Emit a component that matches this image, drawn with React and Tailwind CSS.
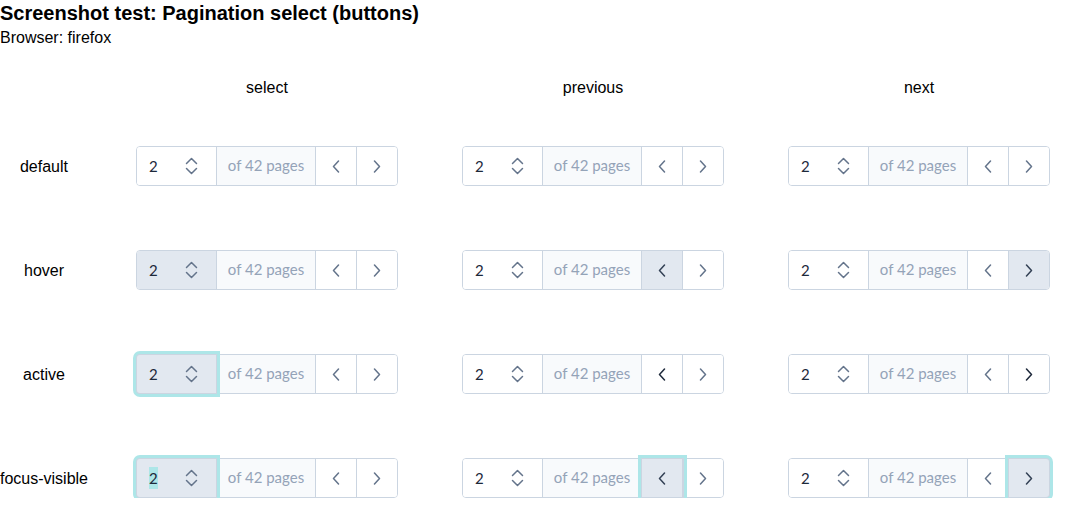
const ROWS = ["default", "hover", "active", "focus-visible"];
const COLS = ["select", "previous", "next"];

const RING = "relative z-10 shadow-[0_0_0_1px_#cbd5e1,0_0_0_4px_#ade6e8]";

function UpDown() {
  return (
    <svg width="13" height="18" viewBox="0 0 13 18" fill="none" stroke="currentColor" strokeWidth="1.5" strokeLinecap="round" strokeLinejoin="round">
      <path d="M1.5 6.5 L6.5 1.5 L11.5 6.5" />
      <path d="M1.5 11.5 L6.5 16.5 L11.5 11.5" />
    </svg>
  );
}

function Chevron({ dir }) {
  return (
    <svg width="8" height="13" viewBox="0 0 8 13" fill="none" stroke="currentColor" strokeWidth="1.5" strokeLinecap="round" strokeLinejoin="round">
      <path d={dir === "left" ? "M6.5 1 L1.5 6.5 L6.5 12" : "M1.5 1 L6.5 6.5 L1.5 12"} />
    </svg>
  );
}

function Pagination({ row, col }) {
  const on = (c) => col === c && row !== "default";
  const selBg = on("select") ? "bg-[#e2e8f0]" : "bg-white";
  const btn = (c) => {
    if (!on(c)) return "bg-white text-[#64748b]";
    if (row === "active") return "bg-white text-[#1e293b]";
    return "bg-[#e2e8f0] text-[#334155]";
  };
  const ring = (c) => (col === c && ((row === "active" && c === "select") || row === "focus-visible") ? RING : "");

  return (
    <div className="flex h-10 w-[262px] rounded-[4px] border border-[#cbd5e1] text-[15px] font-['Lato',sans-serif]">
      <div className={`flex w-[79px] items-center justify-between rounded-l-[3px] pl-3 pr-[18px] text-[#1e293b] ${selBg} ${ring("select")}`}>
        <span className={row === "focus-visible" && col === "select" ? "bg-[#ade6e8]" : ""}>2</span>
        <span className="text-[#64748b]"><UpDown /></span>
      </div>
      <div className="flex w-[100px] items-center justify-center border-x border-[#cbd5e1] bg-[#f8fafc] pb-px text-[#94a3b8]">
        of 42 pages
      </div>
      <div className={`flex w-[41px] items-center justify-center border-r border-[#cbd5e1] ${btn("previous")} ${ring("previous")}`}>
        <Chevron dir="left" />
      </div>
      <div className={`flex w-[40px] items-center justify-center rounded-r-[3px] ${btn("next")} ${ring("next")}`}>
        <Chevron dir="right" />
      </div>
    </div>
  );
}

export default function App() {
  return (
    <div className="bg-white text-black font-['Liberation_Sans',Arial,sans-serif]">
      <h1 className="text-[20px] font-bold leading-[26px]">Screenshot test: Pagination select (buttons)</h1>
      <p className="text-[16px] leading-[22px] mt-px">Browser: firefox</p>
      <div className="mt-[19px] grid h-10 grid-cols-[88px_repeat(3,294px)] gap-x-8 text-[16px]">
        <div />
        {COLS.map((c) => (
          <div key={c} className="flex items-center justify-center">{c}</div>
        ))}
      </div>
      <div className="mt-[38px] grid grid-cols-[88px_repeat(3,294px)] auto-rows-[40px] gap-x-8 gap-y-16 text-[16px]">
        {ROWS.map((r) => (
          <div key={r} className="contents">
            <div className="flex items-center justify-center whitespace-nowrap pt-px">{r}</div>
            {COLS.map((c) => (
              <div key={c} className="flex items-center justify-center">
                <Pagination row={r} col={c} />
              </div>
            ))}
          </div>
        ))}
      </div>
    </div>
  );
}
